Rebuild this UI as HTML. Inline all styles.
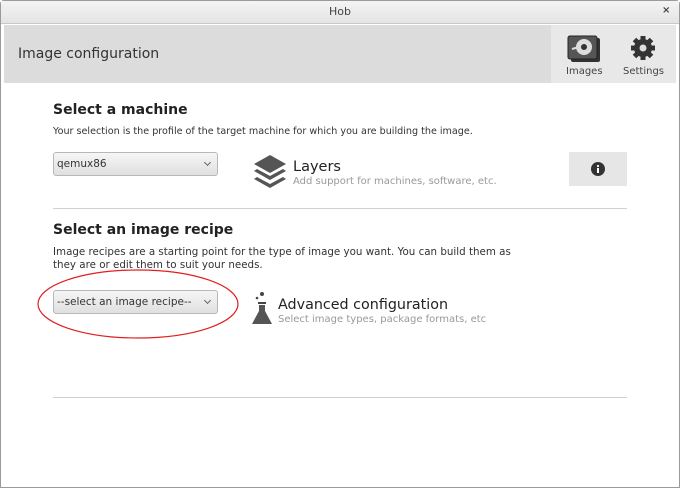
<!DOCTYPE html>
<html><head><style>
*{margin:0;padding:0;box-sizing:border-box}
body{width:680px;height:488px;background:#fff;font-family:"DejaVu Sans","Liberation Sans",sans-serif;position:relative;overflow:hidden}
.a{position:absolute;white-space:nowrap}
.win{position:absolute;left:0;top:0;width:680px;height:488px;border:1px solid #9a9a9a;border-radius:4px 4px 0 0}
.title{position:absolute;left:1px;top:1px;width:678px;height:23px;background:linear-gradient(#f4f4f4,#e4e4e4);border-bottom:1px solid #c8c8c8}
.combo{position:absolute;left:53px;width:165px;height:24px;border:1px solid #b8b8b8;border-radius:3px;background:linear-gradient(#f6f6f6,#e0e0e0);font-size:10.5px;color:#333;padding:5px 0 0 3px}
.combo:after{content:"";position:absolute;right:7px;top:7px;width:4px;height:4px;border-right:1px solid #666;border-bottom:1px solid #666;transform:rotate(45deg)}
.hr{position:absolute;left:53px;width:574px;height:1px;background:#d0d0d0}
</style></head><body>
<div class="win"></div>
<div class="title"></div>
<div class="a" style="left:0;width:680px;text-align:center;top:5px;font-size:11px;color:#444">Hob</div>
<div class="a" style="left:662px;top:5px;font-size:10px;color:#444;font-weight:bold">×</div>
<div class="a" style="left:4px;top:25px;width:547px;height:58px;background:#dcdcdc"></div>
<div class="a" style="left:551px;top:25px;width:125px;height:58px;background:#e8e8e8"></div>
<div class="a" style="left:18px;top:46px;font-size:14px;color:#333">Image configuration</div>
<svg class="a" style="left:567px;top:35px" width="34" height="28" viewBox="0 0 34 28">
<rect x="4" y="3" width="29" height="24" rx="2" fill="#333"/>
<rect x="1" y="1" width="29" height="23" rx="2" fill="#555" stroke="#222"/>
<circle cx="17" cy="12" r="8" fill="#ddd"/><circle cx="17" cy="12" r="3" fill="#333"/>
<path d="M5 14 L12 12" stroke="#ddd" stroke-width="2"/></svg>
<div class="a" style="left:566px;top:66px;font-size:10px;color:#444">Images</div>
<svg class="a" style="left:630px;top:35px" width="26" height="26" viewBox="0 0 26 26">
<g fill="#333"><circle cx="13" cy="13" r="9"/>
<g stroke="#333" stroke-width="5"><path d="M13 1v24M1 13h24M4.5 4.5l17 17M21.5 4.5l-17 17"/></g></g>
<circle cx="13" cy="13" r="3.5" fill="#ddd"/></svg>
<div class="a" style="left:623px;top:66px;font-size:10px;color:#444">Settings</div>

<div class="a" style="left:53px;top:102px;font-size:14px;font-weight:bold;color:#222">Select a machine</div>
<div class="a" style="left:53px;top:126px;font-size:9.6px;color:#333">Your selection is the profile of the target machine for which you are building the image.</div>
<div class="combo" style="top:152px">qemux86</div>
<svg class="a" style="left:254px;top:155px" width="32" height="34" viewBox="0 0 32 34">
<path d="M16 0L32 9L16 18L0 9Z" fill="#555"/>
<path d="M3 14L16 21L29 14L32 16L16 25L0 16Z" fill="#555"/>
<path d="M3 22L16 29L29 22L32 24L16 33L0 24Z" fill="#555"/></svg>
<div class="a" style="left:293px;top:159px;font-size:14.5px;color:#222">Layers</div>
<div class="a" style="left:293px;top:176px;font-size:10px;color:#999">Add support for machines, software, etc.</div>
<div class="a" style="left:569px;top:152px;width:58px;height:34px;background:#e6e6e6"></div>
<svg class="a" style="left:591px;top:162px" width="14" height="14" viewBox="0 0 14 14"><circle cx="7" cy="7" r="7" fill="#333"/><rect x="6" y="6" width="2" height="5" fill="#fff"/><circle cx="7" cy="4" r="1.1" fill="#fff"/></svg>
<div class="hr" style="top:208px"></div>

<div class="a" style="left:53px;top:222px;font-size:14px;font-weight:bold;color:#222">Select an image recipe</div>
<div class="a" style="left:53px;top:246px;font-size:10.3px;color:#333;line-height:12.5px">Image recipes are a starting point for the type of image you want. You can build them as<br>they are or edit them to suit your needs.</div>
<div class="combo" style="top:290px">--select an image recipe--</div>
<svg class="a" style="left:36px;top:268px" width="206" height="72"><ellipse cx="102" cy="36" rx="100" ry="34" fill="none" stroke="#e02020" stroke-width="1.2"/></svg>
<svg class="a" style="left:251px;top:292px" width="22" height="34" viewBox="0 0 22 34">
<circle cx="11" cy="2" r="2" fill="#444"/><circle cx="6" cy="6" r="1.3" fill="#444"/>
<rect x="7" y="10" width="8" height="2" fill="#444"/>
<path d="M8 13h6v6l7 13H1l7-13Z" fill="#555"/></svg>
<div class="a" style="left:278px;top:297px;font-size:14.3px;color:#222">Advanced configuration</div>
<div class="a" style="left:278px;top:314px;font-size:10px;color:#999">Select image types, package formats, etc</div>
<div class="hr" style="top:397px"></div>
</body></html>
